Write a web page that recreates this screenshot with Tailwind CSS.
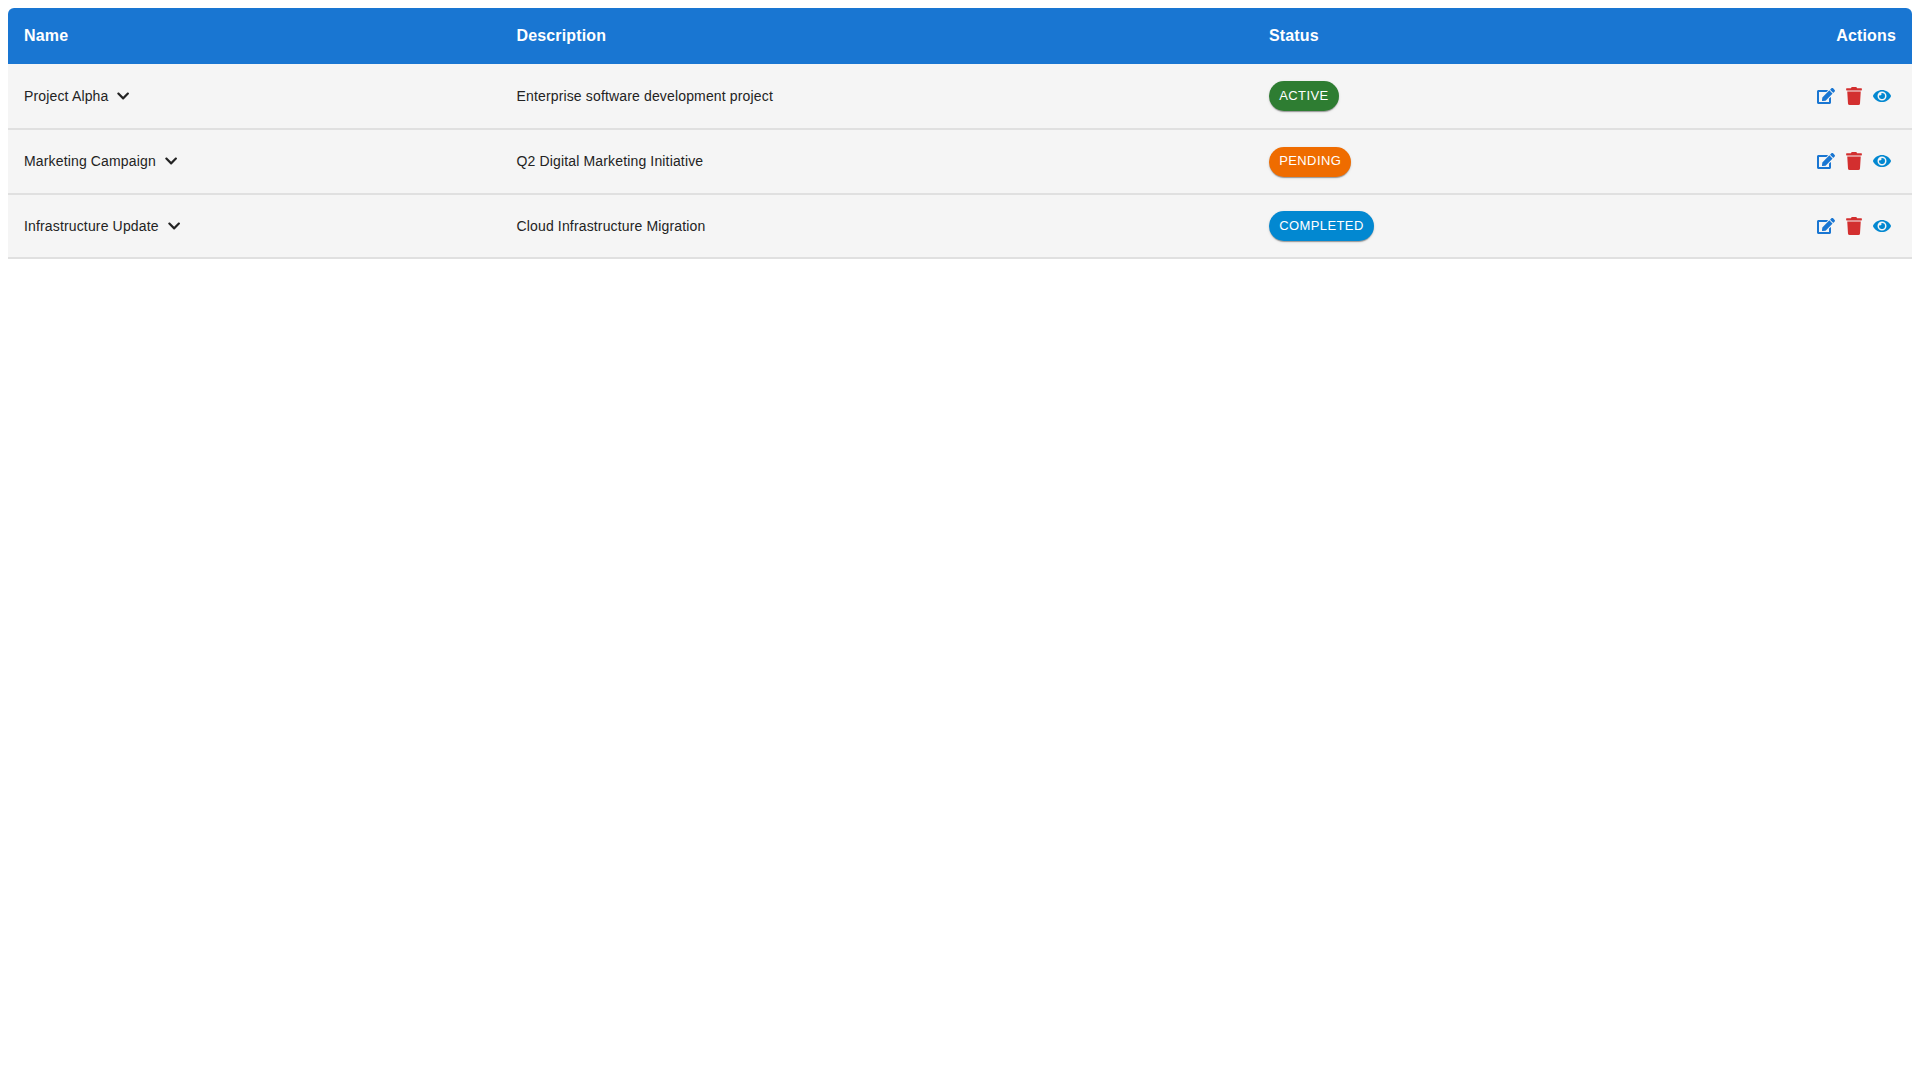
<!DOCTYPE html>
<html lang="en">
<head>
    <meta charset="UTF-8">
    <title>Projects</title>
    <script src="https://cdn.jsdelivr.net/npm/@tailwindcss/browser@4"></script>
</head>
<body class="bg-white p-2 font-['Liberation_Sans',Arial,sans-serif]">
    <table class="w-full table-fixed border-separate border-spacing-0 text-sm text-[#232323] tracking-[0.15px]">
        <thead>
            <tr class="h-14 bg-[#1976d2] text-white text-base font-bold text-left">
                <th class="w-[492.5px] px-4 rounded-tl-md">Name</th>
                <th class="w-[752.5px] px-4">Description</th>
                <th class="px-4">Status</th>
                <th class="w-[200px] px-4 text-right rounded-tr-md">Actions</th>
            </tr>
        </thead>
        <tbody>
            <tr class="h-[66px] bg-[#f5f5f5]">
                <td class="px-4 border-b-2 border-[#e0e0e0]">
                    <div class="flex items-center gap-[9px]">
                        <span>Project Alpha</span>
                        <svg class="w-[12.25px] h-3.5 fill-[#232323]" viewBox="0 0 448 512"><path d="M207.029 381.476L12.686 187.132c-9.373-9.373-9.373-24.569 0-33.941l22.667-22.667c9.357-9.357 24.522-9.375 33.901-.04L224 284.505l154.745-154.021c9.379-9.335 24.544-9.317 33.901.04l22.667 22.667c9.373 9.373 9.373 24.569 0 33.941L240.971 381.476c-9.373 9.372-24.569 9.372-33.942 0z"/></svg>
                    </div>
                </td>
                <td class="px-4 border-b-2 border-[#e0e0e0]">Enterprise software development project</td>
                <td class="px-4 border-b-2 border-[#e0e0e0]">
                    <span class="inline-flex items-center align-middle h-[30px] px-[10.2px] rounded-full bg-[#2e7d32] text-white text-[13px] tracking-[0.4px] shadow-[0_2px_1px_-1px_rgba(0,0,0,0.2),0_1px_1px_0_rgba(0,0,0,0.14),0_1px_3px_0_rgba(0,0,0,0.12)]">ACTIVE</span>
                </td>
                <td class="px-4 border-b-2 border-[#e0e0e0]">
                    <div class="flex justify-end">
                        <span class="w-7 h-7 flex items-center justify-center"><svg class="w-[18px] h-4 fill-[#1976d2]" viewBox="0 0 576 512"><path d="M402.6 83.2l90.2 90.2c3.8 3.8 3.8 10 0 13.8L274.4 405.6l-92.8 10.3c-12.4 1.4-22.9-9.1-21.5-21.5l10.3-92.8L388.8 83.2c3.8-3.8 10-3.8 13.8 0zm162-22.9l-48.8-48.8c-15.2-15.2-39.9-15.2-55.2 0l-35.4 35.4c-3.8 3.8-3.8 10 0 13.8l90.2 90.2c3.8 3.8 10 3.8 13.8 0l35.4-35.4c15.2-15.3 15.2-40 0-55.2zM384 346.2V448H64V128h229.8c3.2 0 6.2-1.3 8.5-3.5l40-40c7.6-7.6 2.2-20.5-8.5-20.5H48C21.5 64 0 85.5 0 112v352c0 26.5 21.5 48 48 48h352c26.5 0 48-21.5 48-48V306.2c0-10.7-12.9-16-20.5-8.5l-40 40c-2.2 2.3-3.5 5.3-3.5 8.5z"/></svg></span>
                        <span class="w-7 h-7 flex items-center justify-center"><svg class="w-4 h-[18px] fill-[#d32f2f]" viewBox="0 0 448 512"><path d="M432 32H312l-9.4-18.7A24 24 0 0 0 281.1 0H166.8a23.72 23.72 0 0 0-21.4 13.3L136 32H16A16 16 0 0 0 0 48v32a16 16 0 0 0 16 16h416a16 16 0 0 0 16-16V48a16 16 0 0 0-16-16zM53.2 467a48 48 0 0 0 47.9 45h245.8a48 48 0 0 0 47.9-45L416 128H32z"/></svg></span>
                        <span class="w-7 h-7 flex items-center justify-center"><svg class="w-[18px] h-4 fill-[#0288d1]" viewBox="0 0 576 512"><path d="M572.52 241.4C518.29 135.59 410.93 64 288 64S57.68 135.64 3.48 241.41a32.35 32.35 0 0 0 0 29.19C57.71 376.41 165.07 448 288 448s230.32-71.64 284.52-177.41a32.35 32.35 0 0 0 0-29.19zM288 400a144 144 0 1 1 144-144 143.93 143.93 0 0 1-144 144zm0-240a95.31 95.31 0 0 0-25.31 3.79 47.85 47.85 0 0 1-66.9 66.9A95.78 95.78 0 1 0 288 160z"/></svg></span>
                    </div>
                </td>
            </tr>
            <tr class="h-[65px] bg-[#f5f5f5]">
                <td class="px-4 pb-0.5 border-b-2 border-[#e0e0e0]">
                    <div class="flex items-center gap-[9px]">
                        <span>Marketing Campaign</span>
                        <svg class="w-[12.25px] h-3.5 fill-[#232323]" viewBox="0 0 448 512"><path d="M207.029 381.476L12.686 187.132c-9.373-9.373-9.373-24.569 0-33.941l22.667-22.667c9.357-9.357 24.522-9.375 33.901-.04L224 284.505l154.745-154.021c9.379-9.335 24.544-9.317 33.901.04l22.667 22.667c9.373 9.373 9.373 24.569 0 33.941L240.971 381.476c-9.373 9.372-24.569 9.372-33.942 0z"/></svg>
                    </div>
                </td>
                <td class="px-4 pb-0.5 border-b-2 border-[#e0e0e0]">Q2 Digital Marketing Initiative</td>
                <td class="px-4 border-b-2 border-[#e0e0e0]">
                    <span class="inline-flex items-center align-middle h-[30px] px-[10.2px] rounded-full bg-[#ef6c00] text-white text-[13px] tracking-[0.4px] shadow-[0_2px_1px_-1px_rgba(0,0,0,0.2),0_1px_1px_0_rgba(0,0,0,0.14),0_1px_3px_0_rgba(0,0,0,0.12)]">PENDING</span>
                </td>
                <td class="px-4 pb-0.5 border-b-2 border-[#e0e0e0]">
                    <div class="flex justify-end">
                        <span class="w-7 h-7 flex items-center justify-center"><svg class="w-[18px] h-4 fill-[#1976d2]" viewBox="0 0 576 512"><path d="M402.6 83.2l90.2 90.2c3.8 3.8 3.8 10 0 13.8L274.4 405.6l-92.8 10.3c-12.4 1.4-22.9-9.1-21.5-21.5l10.3-92.8L388.8 83.2c3.8-3.8 10-3.8 13.8 0zm162-22.9l-48.8-48.8c-15.2-15.2-39.9-15.2-55.2 0l-35.4 35.4c-3.8 3.8-3.8 10 0 13.8l90.2 90.2c3.8 3.8 10 3.8 13.8 0l35.4-35.4c15.2-15.3 15.2-40 0-55.2zM384 346.2V448H64V128h229.8c3.2 0 6.2-1.3 8.5-3.5l40-40c7.6-7.6 2.2-20.5-8.5-20.5H48C21.5 64 0 85.5 0 112v352c0 26.5 21.5 48 48 48h352c26.5 0 48-21.5 48-48V306.2c0-10.7-12.9-16-20.5-8.5l-40 40c-2.2 2.3-3.5 5.3-3.5 8.5z"/></svg></span>
                        <span class="w-7 h-7 flex items-center justify-center"><svg class="w-4 h-[18px] fill-[#d32f2f]" viewBox="0 0 448 512"><path d="M432 32H312l-9.4-18.7A24 24 0 0 0 281.1 0H166.8a23.72 23.72 0 0 0-21.4 13.3L136 32H16A16 16 0 0 0 0 48v32a16 16 0 0 0 16 16h416a16 16 0 0 0 16-16V48a16 16 0 0 0-16-16zM53.2 467a48 48 0 0 0 47.9 45h245.8a48 48 0 0 0 47.9-45L416 128H32z"/></svg></span>
                        <span class="w-7 h-7 flex items-center justify-center"><svg class="w-[18px] h-4 fill-[#0288d1]" viewBox="0 0 576 512"><path d="M572.52 241.4C518.29 135.59 410.93 64 288 64S57.68 135.64 3.48 241.41a32.35 32.35 0 0 0 0 29.19C57.71 376.41 165.07 448 288 448s230.32-71.64 284.52-177.41a32.35 32.35 0 0 0 0-29.19zM288 400a144 144 0 1 1 144-144 143.93 143.93 0 0 1-144 144zm0-240a95.31 95.31 0 0 0-25.31 3.79 47.85 47.85 0 0 1-66.9 66.9A95.78 95.78 0 1 0 288 160z"/></svg></span>
                    </div>
                </td>
            </tr>
            <tr class="h-[64px] bg-[#f5f5f5]">
                <td class="px-4 border-b-2 border-[#e0e0e0]">
                    <div class="flex items-center gap-[9px]">
                        <span>Infrastructure Update</span>
                        <svg class="w-[12.25px] h-3.5 fill-[#232323]" viewBox="0 0 448 512"><path d="M207.029 381.476L12.686 187.132c-9.373-9.373-9.373-24.569 0-33.941l22.667-22.667c9.357-9.357 24.522-9.375 33.901-.04L224 284.505l154.745-154.021c9.379-9.335 24.544-9.317 33.901.04l22.667 22.667c9.373 9.373 9.373 24.569 0 33.941L240.971 381.476c-9.373 9.372-24.569 9.372-33.942 0z"/></svg>
                    </div>
                </td>
                <td class="px-4 border-b-2 border-[#e0e0e0]">Cloud Infrastructure Migration</td>
                <td class="px-4 border-b-2 border-[#e0e0e0]">
                    <span class="inline-flex items-center align-middle h-[30px] px-[10.2px] rounded-full bg-[#0288d1] text-white text-[13px] tracking-[0.4px] shadow-[0_2px_1px_-1px_rgba(0,0,0,0.2),0_1px_1px_0_rgba(0,0,0,0.14),0_1px_3px_0_rgba(0,0,0,0.12)]">COMPLETED</span>
                </td>
                <td class="px-4 border-b-2 border-[#e0e0e0]">
                    <div class="flex justify-end">
                        <span class="w-7 h-7 flex items-center justify-center"><svg class="w-[18px] h-4 fill-[#1976d2]" viewBox="0 0 576 512"><path d="M402.6 83.2l90.2 90.2c3.8 3.8 3.8 10 0 13.8L274.4 405.6l-92.8 10.3c-12.4 1.4-22.9-9.1-21.5-21.5l10.3-92.8L388.8 83.2c3.8-3.8 10-3.8 13.8 0zm162-22.9l-48.8-48.8c-15.2-15.2-39.9-15.2-55.2 0l-35.4 35.4c-3.8 3.8-3.8 10 0 13.8l90.2 90.2c3.8 3.8 10 3.8 13.8 0l35.4-35.4c15.2-15.3 15.2-40 0-55.2zM384 346.2V448H64V128h229.8c3.2 0 6.2-1.3 8.5-3.5l40-40c7.6-7.6 2.2-20.5-8.5-20.5H48C21.5 64 0 85.5 0 112v352c0 26.5 21.5 48 48 48h352c26.5 0 48-21.5 48-48V306.2c0-10.7-12.9-16-20.5-8.5l-40 40c-2.2 2.3-3.5 5.3-3.5 8.5z"/></svg></span>
                        <span class="w-7 h-7 flex items-center justify-center"><svg class="w-4 h-[18px] fill-[#d32f2f]" viewBox="0 0 448 512"><path d="M432 32H312l-9.4-18.7A24 24 0 0 0 281.1 0H166.8a23.72 23.72 0 0 0-21.4 13.3L136 32H16A16 16 0 0 0 0 48v32a16 16 0 0 0 16 16h416a16 16 0 0 0 16-16V48a16 16 0 0 0-16-16zM53.2 467a48 48 0 0 0 47.9 45h245.8a48 48 0 0 0 47.9-45L416 128H32z"/></svg></span>
                        <span class="w-7 h-7 flex items-center justify-center"><svg class="w-[18px] h-4 fill-[#0288d1]" viewBox="0 0 576 512"><path d="M572.52 241.4C518.29 135.59 410.93 64 288 64S57.68 135.64 3.48 241.41a32.35 32.35 0 0 0 0 29.19C57.71 376.41 165.07 448 288 448s230.32-71.64 284.52-177.41a32.35 32.35 0 0 0 0-29.19zM288 400a144 144 0 1 1 144-144 143.93 143.93 0 0 1-144 144zm0-240a95.31 95.31 0 0 0-25.31 3.79 47.85 47.85 0 0 1-66.9 66.9A95.78 95.78 0 1 0 288 160z"/></svg></span>
                    </div>
                </td>
            </tr>
        </tbody>
    </table>
</body>
</html>
